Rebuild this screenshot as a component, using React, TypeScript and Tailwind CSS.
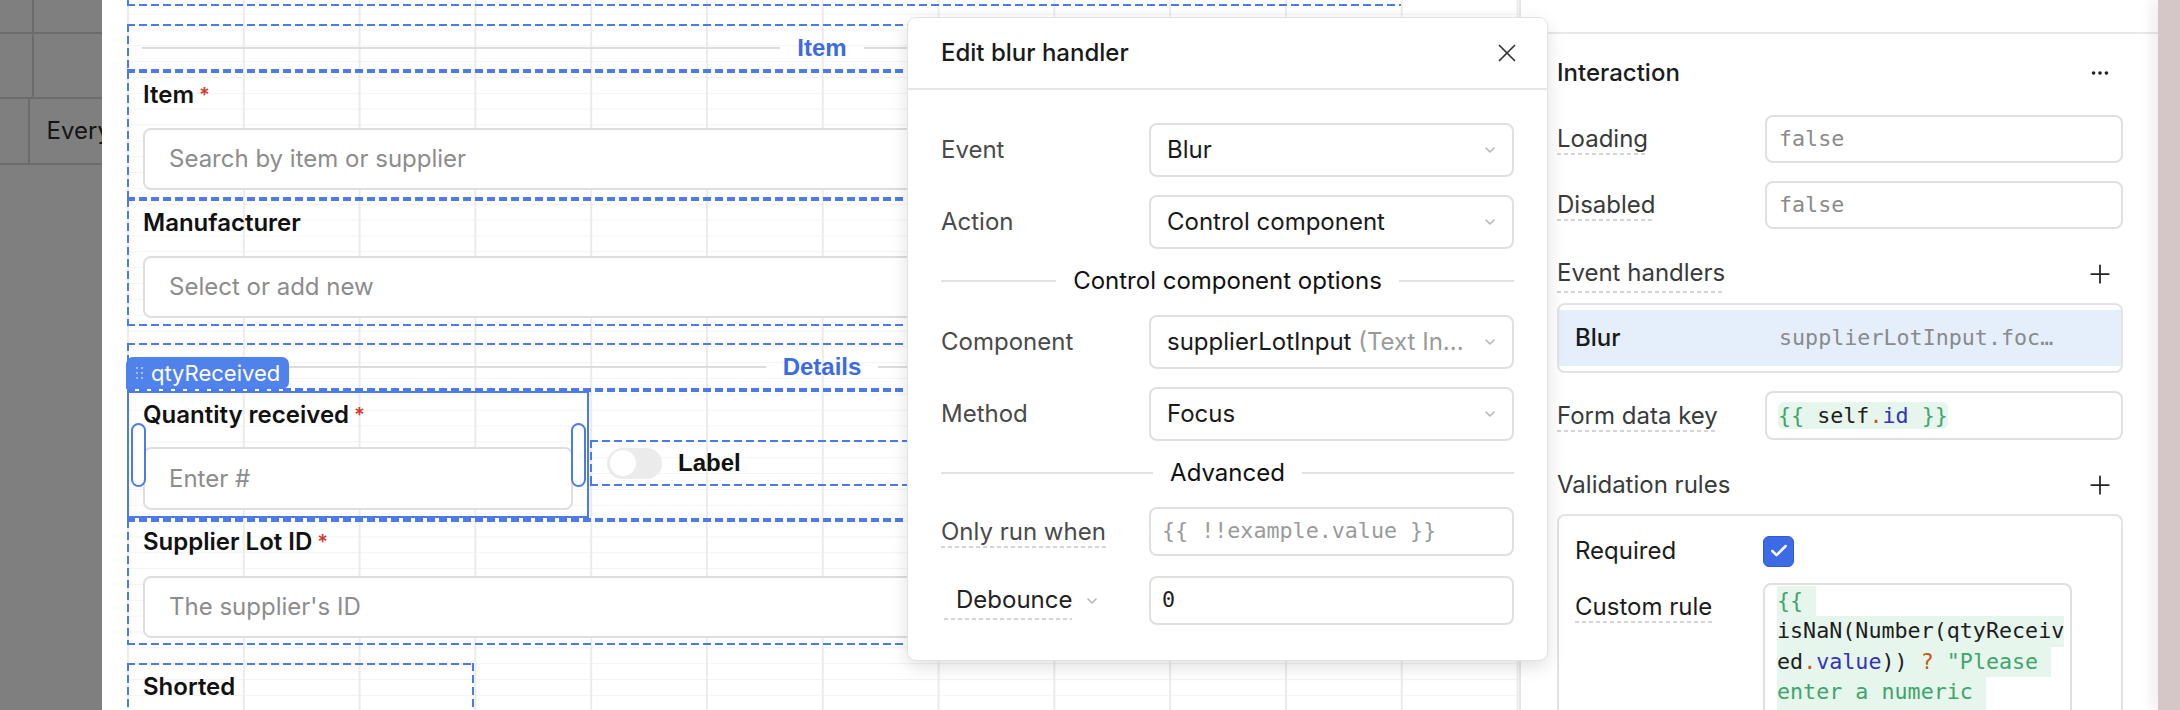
import React from 'react';
import { ChevronDown, X, Plus, Ellipsis, Check } from 'lucide-react';

// dashed selection outline used by every canvas container
const DASH_BOX =
  'bg-[image:repeating-linear-gradient(90deg,#4a7be9_0_8px,transparent_8px_12px),repeating-linear-gradient(90deg,#4a7be9_0_8px,transparent_8px_12px),repeating-linear-gradient(180deg,#4a7be9_0_8px,transparent_8px_12px),repeating-linear-gradient(180deg,#4a7be9_0_8px,transparent_8px_12px)] bg-size-[100%_2px,100%_2px,2px_100%,2px_100%] bg-position-[0_0,0_100%,0_0,100%_0] bg-no-repeat';

// only left + bottom edges (container cut by the top of the canvas)
const DASH_LB =
  'bg-[image:repeating-linear-gradient(90deg,#4a7be9_0_8px,transparent_8px_12px),repeating-linear-gradient(180deg,#4a7be9_0_8px,transparent_8px_12px)] bg-size-[100%_2px,2px_100%] bg-position-[0_100%,0_0] bg-no-repeat';

const DOTTED =
  'bg-[image:repeating-linear-gradient(90deg,#d4d4d4_0_4px,transparent_4px_7px)] bg-size-[100%_2px] bg-bottom bg-no-repeat pb-[2px]';

const MONO = "font-['DejaVu_Sans_Mono',monospace]";

const Asterisk = () => <span className="ml-[5px] text-[20px] text-[#d3392c] align-top">*</span>;

const SectionHeader: React.FC<{ title: string }> = ({ title }) => (
  <div className={`${DASH_BOX} flex h-[47px] items-center px-[15px]`}>
    <div className="h-[2px] flex-1 bg-[#dddddd]" />
    <div className="px-[17px] font-['Liberation_Sans',Arial,sans-serif] text-[24px] font-bold text-[#3b6be3]">{title}</div>
    <div className="h-[2px] flex-1 bg-[#dddddd]" />
  </div>
);

const TextInput: React.FC<{ placeholder: string; className?: string }> = ({ placeholder, className }) => (
  <div className={`flex items-center rounded-[8px] border-2 border-[#dedede] bg-white pl-[24px] text-[24px] text-[#8c8c8c] ${className ?? ''}`}>
    {placeholder}
  </div>
);

const FieldLabel: React.FC<{ text: string; required?: boolean }> = ({ text, required }) => (
  <div className="h-[28px] text-[24px] leading-[28px] font-semibold text-[#111]">
    {text}
    {required && <Asterisk />}
  </div>
);

const DialogSelect: React.FC<{ children: React.ReactNode }> = ({ children }) => (
  <div className="flex h-[54px] flex-1 items-center justify-between rounded-[8px] border-2 border-[#e0e0e0] pr-[14px] pl-[16px] text-[24px] text-[#1a1a1a]">
    <span className="truncate">{children}</span>
    <ChevronDown size={16} strokeWidth={2.5} className="shrink-0 text-[#b8b8b8]" />
  </div>
);

const Divider: React.FC<{ title: string }> = ({ title }) => (
  <div className="flex h-[30px] items-center">
    <div className="h-[2px] flex-1 bg-[#e3e3e3]" />
    <div className="px-[17px] text-[24px] text-[#111]">{title}</div>
    <div className="h-[2px] flex-1 bg-[#e3e3e3]" />
  </div>
);

const PanelInput: React.FC<{ children: React.ReactNode }> = ({ children }) => (
  <div className={`flex h-[48px] w-[358px] items-center rounded-[8px] border-2 border-[#e0e0e0] pl-[12px] text-[21.7px] ${MONO}`}>
    {children}
  </div>
);

const App: React.FC = () => {
  return (
    <div className="relative flex h-[710px] w-[2180px] overflow-hidden bg-white font-[Inter,sans-serif]">
      {/* dimmed table behind the modal */}
      <div className="flex w-[102px] shrink-0 flex-col bg-[#7f7f7f]">
        <div className="flex h-[34px] border-b-2 border-[#6c6c6c]">
          <div className="w-[34px] border-r-2 border-[#6c6c6c]" />
        </div>
        <div className="flex h-[65px] border-b-2 border-[#6c6c6c]">
          <div className="w-[34px] border-r-2 border-[#6c6c6c]" />
        </div>
        <div className="flex h-[66px] border-b-2 border-[#6c6c6c]">
          <div className="w-[34px] border-r-2 border-[#6c6c6c]" />
          <div className="flex items-center overflow-hidden pl-[17px] text-[24px] whitespace-nowrap text-[#141414]">Every</div>
        </div>
      </div>

      {/* form canvas */}
      <div className="w-[1417px] shrink-0 bg-white pl-[25px]">
        <div className="h-full w-[1392px] bg-[image:linear-gradient(90deg,#ebebeb_2px,transparent_2px),linear-gradient(180deg,#f3f3f3_1px,transparent_1px)] bg-size-[115.8px_100%,100%_15.85px] bg-position-[0_0,0_13.6px]">
          <div className="flex w-[1390px] flex-col">
            <div className={`${DASH_LB} h-[6px] w-[1274px]`} />

            <div className="mt-[18px]">
              <SectionHeader title="Item" />
            </div>

            <div className={`${DASH_BOX} pt-[10px] pr-[16px] pb-[9px] pl-[16px]`}>
              <FieldLabel text="Item" required />
              <TextInput placeholder="Search by item or supplier" className="mt-[19px] h-[62px]" />
            </div>

            <div className={`${DASH_BOX} pt-[10px] pr-[16px] pb-[8px] pl-[16px]`}>
              <FieldLabel text="Manufacturer" />
              <TextInput placeholder="Select or add new" className="mt-[19px] h-[62px]" />
            </div>

            <div className="mt-[17px]">
              <SectionHeader title="Details" />
            </div>

            <div className={`${DASH_BOX} flex h-[130px]`}>
              <div className="relative mt-[1px] h-[127px] w-[462px] border-2 border-[#4a7be9] px-[14px] pt-[8px]">
                <div className="absolute -top-[36px] -left-[3px] flex h-[32px] w-[163px] items-center rounded-t-[7px] rounded-br-[7px] bg-[#4f82ea] pl-[10px] text-[22px] text-white">
                  <div className="mr-[8px] grid grid-cols-2 gap-x-[3px] gap-y-[3px]">
                    {[0, 1, 2, 3, 4, 5].map((i) => (
                      <div key={i} className="h-[2px] w-[2px] rounded-full bg-[#c3d4f8]" />
                    ))}
                  </div>
                  qtyReceived
                </div>
                <FieldLabel text="Quantity received" required />
                <TextInput placeholder="Enter #" className="mt-[18px] h-[63px]" />
                <div className="absolute top-[30px] left-[2px] h-[64px] w-[15px] rounded-full border-2 border-[#4a7be9] bg-white" />
                <div className="absolute top-[30px] right-[1px] h-[64px] w-[15px] rounded-full border-2 border-[#4a7be9] bg-white" />
              </div>
              <div className={`${DASH_BOX} mt-[50px] ml-[1px] flex h-[46px] flex-1 items-center pl-[17px]`}>
                <div className="flex h-[31px] w-[55px] items-center rounded-full bg-[#ebebeb] pl-[3px]">
                  <div className="h-[26px] w-[26px] rounded-full bg-white" />
                </div>
                <div className="ml-[16px] font-['Liberation_Sans',Arial,sans-serif] text-[24px] font-bold text-[#111]">Label</div>
              </div>
            </div>

            <div className={`${DASH_BOX} pt-[8px] pr-[16px] pb-[7px] pl-[16px]`}>
              <FieldLabel text="Supplier Lot ID" required />
              <TextInput placeholder="The supplier's ID" className="mt-[20px] h-[62px]" />
            </div>

            <div className={`${DASH_BOX} mt-[18px] h-[80px] w-[347px] pt-[10px] pl-[16px]`}>
              <FieldLabel text="Shorted" />
            </div>
          </div>
        </div>
      </div>

      {/* inspector panel */}
      <div className="flex w-[639px] shrink-0 flex-col border-l-2 border-[#e6e6e6] bg-white">
        <div className="h-[34px] shrink-0 border-b-2 border-[#e8e8e8]" />
        <div className="flex flex-col pr-[35px] pl-[36px]">
          <div className="mt-[24px] flex h-[30px] items-center justify-between text-[24px] font-medium text-[#1c1c1c]">
            Interaction
            <Ellipsis size={22} strokeWidth={2} className="mr-[12px] text-[#222]" />
          </div>

          <div className="mt-[27px] flex items-center">
            <div className="w-[208px] text-[24px] text-[#3a3a3a]">
              <span className={DOTTED}>Loading</span>
            </div>
            <PanelInput>
              <span className="text-[#8a8a8a]">false</span>
            </PanelInput>
          </div>
          <div className="mt-[18px] flex items-center">
            <div className="w-[208px] text-[24px] text-[#3a3a3a]">
              <span className={DOTTED}>Disabled</span>
            </div>
            <PanelInput>
              <span className="text-[#8a8a8a]">false</span>
            </PanelInput>
          </div>

          <div className="mt-[30px] flex h-[30px] items-center justify-between text-[24px] text-[#3a3a3a]">
            <span className={DOTTED}>Event handlers</span>
            <Plus size={30} strokeWidth={1.4} className="mr-[8px] text-[#222]" />
          </div>
          <div className="mt-[14px] rounded-[8px] border-2 border-[#e3e3e3] py-[5px]">
            <div className="flex h-[56px] items-center bg-[#e5effc] pl-[16px]">
              <div className="w-[204px] text-[24px] font-medium text-[#1a1a1a]">Blur</div>
              <div className={`text-[21.7px] text-[#8a8a8a] ${MONO}`}>supplierLotInput.foc…</div>
            </div>
          </div>

          <div className="mt-[18px] flex items-center">
            <div className="w-[208px] text-[24px] text-[#3a3a3a]">
              <span className={DOTTED}>Form data key</span>
            </div>
            <div className={`flex h-[49px] w-[358px] items-center rounded-[8px] border-2 border-[#e0e0e0] pl-[11px] text-[21.7px] ${MONO}`}>
              <span className="rounded-[6px] bg-[#e7f6ec] leading-[27px]">
                <span className="text-[#3ea56c]">{'{{ '}</span>
                <span className="text-[#1e1e1e]">self</span>
                <span className="text-[#c25a1a]">.</span>
                <span className="text-[#3434b8]">id</span>
                <span className="text-[#3ea56c]">{' }}'}</span>
              </span>
            </div>
          </div>

          <div className="mt-[30px] flex h-[30px] items-center justify-between text-[24px] text-[#3a3a3a]">
            Validation rules
            <Plus size={30} strokeWidth={1.4} className="mr-[8px] text-[#222]" />
          </div>
          <div className="mt-[14px] h-[260px] rounded-[8px] border-2 border-[#e3e3e3] pt-[17px] pl-[16px]">
            <div className="flex items-center">
              <div className="w-[188px] text-[24px] text-[#1c1c1c]">Required</div>
              <div className="flex h-[31px] w-[31px] items-center justify-center rounded-[6px] border border-[#2f5bd6] bg-[#3d6be6]">
                <Check size={20} strokeWidth={3} className="text-white" />
              </div>
            </div>
            <div className="mt-[14px] flex items-start">
              <div className="w-[188px] pt-[6px] text-[24px] text-[#1c1c1c]">
                <span className={DOTTED}>Custom rule</span>
              </div>
              <div className={`h-[200px] w-[309px] rounded-[8px] border-2 border-[#e0e0e0] px-[12px] pt-[1px] text-[21.7px] leading-[30.4px] whitespace-pre ${MONO}`}>
                <div className="w-fit bg-[#e7f6ec] text-[#3ea56c]">{'{{ '}</div>
                <div className="w-fit bg-[#e7f6ec] text-[#1e1e1e]">isNaN(Number(qtyReceiv</div>
                <div className="w-fit bg-[#e7f6ec] text-[#1e1e1e]">
                  ed<span className="text-[#c25a1a]">.</span>
                  <span className="text-[#3434b8]">value</span>)) <span className="text-[#c25a1a]">?</span>{' '}
                  <span className="text-[#3ea56c]">{'"Please '}</span>
                </div>
                <div className="w-fit bg-[#e7f6ec] text-[#3ea56c]">{'enter a numeric '}</div>
                <div className="w-fit bg-[#e7f6ec] text-[#3ea56c]">{'value" : null }}'}</div>
              </div>
            </div>
          </div>
        </div>
      </div>

      <div className="w-[22px] shrink-0 bg-[#d5c7c7] shadow-[-8px_0_12px_rgba(0,0,0,0.06)]" />

      {/* event handler editor */}
      <div className="absolute top-[17px] left-[907px] flex h-[644px] w-[641px] flex-col rounded-[9px] border border-[#e2e2e2] bg-white shadow-[0_6px_18px_rgba(0,0,0,0.12)]">
        <div className="flex h-[72px] shrink-0 items-center justify-between border-b-2 border-[#e6e6e6] pr-[25px] pl-[33px]">
          <div className="text-[24px] font-medium text-[#1a1a1a]">Edit blur handler</div>
          <X size={30} strokeWidth={1.4} className="text-[#333]" />
        </div>
        <div className="flex flex-col px-[33px] pt-[33px]">
          <div className="flex items-center">
            <div className="w-[208px] text-[24px] text-[#4a4a4a]">Event</div>
            <DialogSelect>Blur</DialogSelect>
          </div>
          <div className="mt-[18px] flex items-center">
            <div className="w-[208px] text-[24px] text-[#4a4a4a]">Action</div>
            <DialogSelect>Control component</DialogSelect>
          </div>
          <div className="mt-[17px]">
            <Divider title="Control component options" />
          </div>
          <div className="mt-[19px] flex items-center">
            <div className="w-[208px] text-[24px] text-[#4a4a4a]">Component</div>
            <DialogSelect>
              supplierLotInput <span className="text-[#9a9a9a]">(Text In...</span>
            </DialogSelect>
          </div>
          <div className="mt-[18px] flex items-center">
            <div className="w-[208px] text-[24px] text-[#4a4a4a]">Method</div>
            <DialogSelect>Focus</DialogSelect>
          </div>
          <div className="mt-[17px]">
            <Divider title="Advanced" />
          </div>
          <div className="mt-[19px] flex items-center">
            <div className="w-[208px] text-[24px] text-[#4a4a4a]">
              <span className={DOTTED}>Only run when</span>
            </div>
            <div className={`flex h-[49px] flex-1 items-center rounded-[8px] border-2 border-[#e0e0e0] pl-[11px] text-[21.7px] text-[#9a9a9a] ${MONO}`}>
              {'{{ !!example.value }}'}
            </div>
          </div>
          <div className="mt-[20px] flex items-center">
            <div className="flex w-[208px] items-center pl-[3px] text-[24px] text-[#222]">
              <span className={`${DOTTED} pl-[12px]`}>Debounce</span>
              <ChevronDown size={16} strokeWidth={2.5} className="ml-[12px] text-[#b8b8b8]" />
            </div>
            <div className={`flex h-[49px] flex-1 items-center rounded-[8px] border-2 border-[#e0e0e0] pl-[11px] text-[21.7px] text-[#1e1e1e] ${MONO}`}>
              0
            </div>
          </div>
        </div>
      </div>
    </div>
  );
};

export default App;
